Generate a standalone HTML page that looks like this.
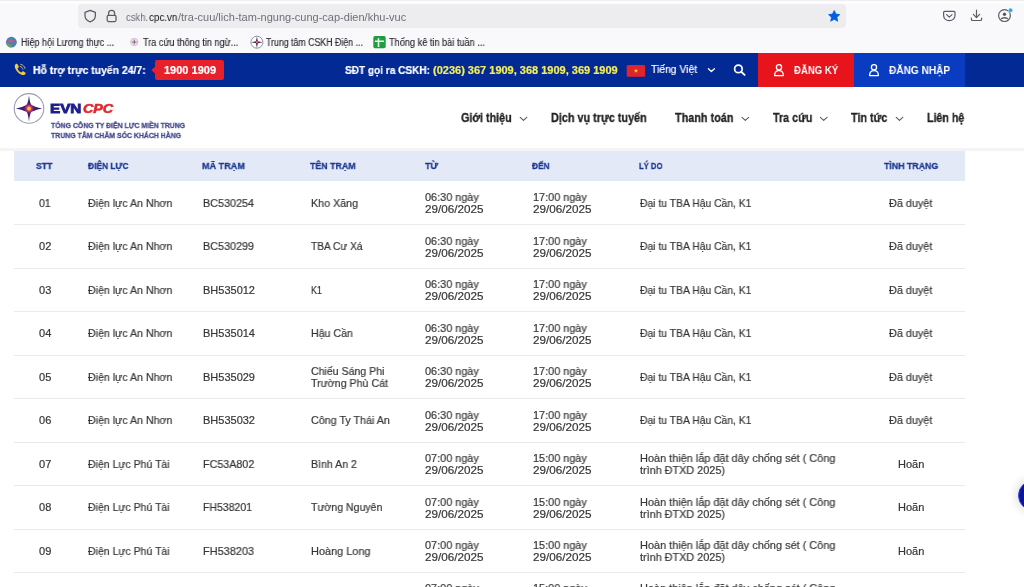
<!DOCTYPE html>
<html><head><meta charset="utf-8">
<style>
*{margin:0;padding:0;box-sizing:border-box}
html,body{width:1024px;height:587px;overflow:hidden;background:#fff;font-family:"Liberation Sans",sans-serif}
body{position:relative}
.t{position:absolute;white-space:nowrap;line-height:1;transform-origin:0 0;will-change:transform}
.a{position:absolute}
svg{position:absolute;overflow:visible}
</style></head><body>
<!-- browser chrome -->
<div class="a" style="left:0;top:0;width:1024px;height:53px;background:#f9f9fb"></div>
<div class="a" style="left:0;top:0;width:1024px;height:1px;background:#eeeef1"></div>
<div class="a" style="left:0;top:1px;width:1024px;height:3px;background:#fdfdfe"></div>
<div class="a" style="left:78px;top:4px;width:768px;height:23.5px;background:#ededf0;border-radius:4px"></div>
<svg style="left:0;top:0" width="1024" height="53" viewBox="0 0 1024 53">
  <!-- shield -->
  <path d="M90.2 10.4 L95.4 12.3 V15.6 C95.4 19 93.2 20.9 90.2 21.9 C87.2 20.9 85 19 85 15.6 V12.3 Z" fill="none" stroke="#5b5b66" stroke-width="1.25" stroke-linejoin="round"/>
  <!-- lock -->
  <path d="M108.6 15.4 V13.2 C108.6 11.4 110 10.3 111.6 10.3 C113.2 10.3 114.6 11.4 114.6 13.2 V15.4" fill="none" stroke="#5b5b66" stroke-width="1.25"/>
  <rect x="107.2" y="15.3" width="8.8" height="6.2" rx="1.2" fill="none" stroke="#5b5b66" stroke-width="1.25"/>
  <!-- star -->
  <path d="M834.2 10.5 L835.9 14.1 L839.8 14.6 L836.9 17.3 L837.7 21.2 L834.2 19.3 L830.7 21.2 L831.5 17.3 L828.6 14.6 L832.5 14.1 Z" fill="#0061e0" stroke="#0061e0" stroke-width="0.8" stroke-linejoin="round"/>
  <!-- pocket -->
  <path d="M944.6 11.4 H954 C954.6 11.4 955 11.8 955 12.4 V15.2 C955 18.4 952.6 20.6 949.3 20.6 C946 20.6 943.6 18.4 943.6 15.2 V12.4 C943.6 11.8 944 11.4 944.6 11.4 Z" fill="none" stroke="#5b5b66" stroke-width="1.2"/>
  <path d="M946.6 14.6 L949.3 17.1 L952 14.6" fill="none" stroke="#5b5b66" stroke-width="1.2" stroke-linecap="round" stroke-linejoin="round"/>
  <!-- download -->
  <path d="M976.5 10 V17.4 M973.4 14.4 L976.5 17.6 L979.6 14.4 M971.4 18 V19.2 C971.4 20 971.9 20.5 972.7 20.5 H980.3 C981.1 20.5 981.6 20 981.6 19.2 V18" fill="none" stroke="#5b5b66" stroke-width="1.2" stroke-linecap="round" stroke-linejoin="round"/>
  <!-- account -->
  <circle cx="1004.5" cy="15.6" r="5.9" fill="none" stroke="#5b5b66" stroke-width="1.2"/>
  <circle cx="1004.5" cy="14.2" r="1.7" fill="#5b5b66"/>
  <path d="M1001.2 19 C1002 17.4 1007 17.4 1007.8 19" fill="none" stroke="#5b5b66" stroke-width="1.5"/>
  <circle cx="1010.5" cy="10.3" r="2.2" fill="#25a8d8" stroke="#f9f9fb" stroke-width="0.6"/>
  <!-- bookmark icons -->
  <circle cx="11.4" cy="42.2" r="5.4" fill="#4f7fb0"/>
  <path d="M6.2 43.5 C7.5 42.5 9 43.5 10.5 44.8 C11.5 45.8 11.8 47 11.2 47.6 C8.8 47.5 6.8 45.8 6.2 43.5 Z" fill="#6aa060"/>
  <path d="M8.5 39.5 C10.5 38.8 13 39.5 14 41.2 C13 42.8 10.5 43 9 42 C8.3 41.3 8.2 40.3 8.5 39.5 Z" fill="#c0607a"/>
  <circle cx="134.3" cy="42" r="3.7" fill="#efe0ea" stroke="#c8b0c4" stroke-width="0.7"/>
  <path d="M134.3 39.6 V44.4 M131.9 42 H136.7" stroke="#7a5a78" stroke-width="0.9"/>
  <circle cx="256.9" cy="42.2" r="6" fill="#fff" stroke="#8d90a8" stroke-width="1"/>
  <path d="M256.9 36.4 L257.9 41.2 L262.6 42.2 L257.9 43.2 L256.9 48 L255.9 43.2 L251.2 42.2 L255.9 41.2 Z" fill="#4a2a58"/>
  <circle cx="256.9" cy="42.2" r="1.1" fill="#e07a5a"/>
  <rect x="373.3" y="36.1" width="12.4" height="12.1" rx="1.6" fill="#1f9d40"/>
  <path d="M378.5 38.2 V47 M374.9 41.2 H384" stroke="#e8ffe8" stroke-width="1.6"/>
</svg>

<!-- top bar -->
<div class="a" style="left:0;top:53px;width:1024px;height:34px;background:#032995"></div>
<div class="a" style="left:758px;top:53px;width:95.6px;height:34px;background:#e7141c"></div>
<div class="a" style="left:853.6px;top:53px;width:111.3px;height:34px;background:#0a3cc2"></div>
<div class="a" style="left:155.1px;top:60px;width:68.9px;height:20px;background:#e7202a;border-radius:2px"></div>
<svg style="left:0;top:53px" width="1024" height="34" viewBox="0 53 1024 34">
  <path d="M151.2 70.1 L155.6 66.3 V73.9 Z" fill="#e7202a"/>
  <!-- phone -->
  <path d="M15.6 64.2 C16.4 63.6 17.3 63.8 17.7 64.5 L18.6 66.2 C18.9 66.9 18.7 67.5 18.1 67.9 L17.4 68.4 C18 70.2 19.6 71.9 21.4 72.6 L21.9 71.9 C22.3 71.3 23 71.1 23.6 71.5 L25.1 72.5 C25.7 72.9 25.8 73.7 25.2 74.2 L24.6 74.7 C23.2 75.6 20.2 74.6 17.8 72.2 C15.4 69.8 14.2 66.6 15 65 Z" fill="#f5c94a"/>
  <path d="M20.2 66.4 C21.6 66.7 22.6 67.7 22.9 69.1 M20.8 64.3 C22.9 64.6 24.6 66.3 25 68.4" fill="none" stroke="#b9b2a0" stroke-width="1" stroke-linecap="round"/>
  <!-- flag -->
  <rect x="626.7" y="65" width="18.5" height="11.7" rx="1.5" fill="#e0242c"/>
  <path d="M636 68.6 L636.6 70.2 L638.3 70.2 L636.9 71.2 L637.4 72.8 L636 71.8 L634.6 72.8 L635.1 71.2 L633.7 70.2 L635.4 70.2 Z" fill="#f7d83a"/>
  <!-- chevron -->
  <path d="M708.4 68.7 L711.4 71.5 L714.4 68.7" fill="none" stroke="#fff" stroke-width="1.3" stroke-linecap="round" stroke-linejoin="round"/>
  <!-- search -->
  <circle cx="738.4" cy="68.9" r="3.8" fill="none" stroke="#fff" stroke-width="1.7"/>
  <path d="M741.2 71.7 L744.6 74.9" stroke="#fff" stroke-width="1.9" stroke-linecap="round"/>
  <!-- users -->
  <g fill="none" stroke="#fff" stroke-width="1.3">
    <circle cx="779" cy="67.2" r="2.6"/>
    <path d="M774.6 75.6 C774.6 72.4 776.4 70.6 779 70.6 C781.6 70.6 783.4 72.4 783.4 75.6 Z" stroke-linejoin="round"/>
    <circle cx="874" cy="67.2" r="2.6"/>
    <path d="M869.6 75.6 C869.6 72.4 871.4 70.6 874 70.6 C876.6 70.6 878.4 72.4 878.4 75.6 Z" stroke-linejoin="round"/>
  </g>
</svg>

<!-- header -->
<div class="a" style="left:0;top:147.5px;width:1024px;height:3.5px;background:#f4f4f4"></div>
<svg style="left:0;top:87px" width="1024" height="60" viewBox="0 87 1024 60">
  <circle cx="29" cy="108.4" r="14.8" fill="#fff" stroke="#9c9cb6" stroke-width="1.1"/>
  <defs><radialGradient id="sg" cx="0.5" cy="0.5" r="0.5"><stop offset="0" stop-color="#ffe640"/><stop offset="0.1" stop-color="#f8b83a"/><stop offset="0.2" stop-color="#c8385a"/><stop offset="0.38" stop-color="#4a1a7a"/><stop offset="1" stop-color="#1c1870"/></radialGradient></defs>
  <path d="M29 95.3 C29.6 100.5 30.4 104.8 32.2 105.2 C34 106.2 37.5 107.6 42.1 108.4 C37.5 109.2 34 110.6 32.2 111.6 C30.4 112 29.6 116.3 29 121.8 C28.4 116.3 27.6 112 25.8 111.6 C24 110.6 20.5 109.2 15.9 108.4 C20.5 107.6 24 106.2 25.8 105.2 C27.6 104.8 28.4 100.5 29 95.3 Z" fill="url(#sg)"/>
  <g fill="none" stroke="#5a5a5a" stroke-width="1.1" stroke-linecap="round" stroke-linejoin="round">
    <path d="M520.2 117.4 L523.5 120.4 L526.8 117.4"/>
    <path d="M742 117.4 L745.3 120.4 L748.6 117.4"/>
    <path d="M820.4 117.4 L823.7 120.4 L827 117.4"/>
    <path d="M896.2 117.4 L899.5 120.4 L902.8 117.4"/>
  </g>
</svg>

<!-- table -->
<div class="a" style="left:14px;top:151px;width:950.5px;height:29.6px;background:#e4e9f8"></div>
<div class="a" style="left:14px;top:224px;width:951px;height:1px;background:#ebebeb"></div>
<div class="a" style="left:14px;top:267.5px;width:951px;height:1px;background:#ebebeb"></div>
<div class="a" style="left:14px;top:311px;width:951px;height:1px;background:#ebebeb"></div>
<div class="a" style="left:14px;top:354.5px;width:951px;height:1px;background:#ebebeb"></div>
<div class="a" style="left:14px;top:398px;width:951px;height:1px;background:#ebebeb"></div>
<div class="a" style="left:14px;top:441.5px;width:951px;height:1px;background:#ebebeb"></div>
<div class="a" style="left:14px;top:485px;width:951px;height:1px;background:#ebebeb"></div>
<div class="a" style="left:14px;top:528.5px;width:951px;height:1px;background:#ebebeb"></div>
<div class="a" style="left:14px;top:572px;width:951px;height:1px;background:#ebebeb"></div>

<!-- floating circle -->
<div class="a" style="left:1017.8px;top:480.2px;width:31px;height:31px;border-radius:50%;background:#0a159c;border:1px solid #3a4ad0;box-shadow:0 0 10px 2px rgba(0,0,0,0.13)"></div>

<div class="t" style="left:125.70px;top:11.56px;font-size:10.8px;color:#6f6f78;transform:scaleX(0.8770)">cskh.</div>
<div class="t" style="left:148.80px;top:11.56px;font-size:10.8px;color:#15141a;transform:scaleX(0.9071)">cpc.vn</div>
<div class="t" style="left:177.60px;top:11.56px;font-size:10.8px;color:#6f6f78;transform:scaleX(1.0194)">/tra-cuu/lich-tam-ngung-cung-cap-dien/khu-vuc</div>
<div class="t" style="left:20.50px;top:37.83px;font-size:10px;color:#2b2a33;transform:scaleX(0.9020);-webkit-text-stroke:0.15px #2b2a33">Hiệp hội Lương thực ...</div>
<div class="t" style="left:143.00px;top:37.83px;font-size:10px;color:#2b2a33;transform:scaleX(0.9090);-webkit-text-stroke:0.15px #2b2a33">Tra cứu thông tin ngừ...</div>
<div class="t" style="left:266.10px;top:37.83px;font-size:10px;color:#2b2a33;transform:scaleX(0.8790);-webkit-text-stroke:0.15px #2b2a33">Trung tâm CSKH Điện ...</div>
<div class="t" style="left:388.50px;top:37.83px;font-size:10px;color:#2b2a33;transform:scaleX(0.9177);-webkit-text-stroke:0.15px #2b2a33">Thống kê tin bài tuần ...</div>
<div class="t" style="left:32.80px;top:64.99px;font-size:11px;color:#ffffff;font-weight:bold;transform:scaleX(0.9457);-webkit-text-stroke:0.2px #ffffff">Hỗ trợ trực tuyến 24/7:</div>
<div class="t" style="left:163.90px;top:64.99px;font-size:11px;color:#ffffff;font-weight:bold;-webkit-text-stroke:0.2px #ffffff">1900 1909</div>
<div class="t" style="left:345.20px;top:64.99px;font-size:11px;color:#ffffff;font-weight:bold;transform:scaleX(0.9151);-webkit-text-stroke:0.2px #ffffff">SĐT gọi ra CSKH:</div>
<div class="t" style="left:433.00px;top:64.99px;font-size:11px;color:#f3ef5c;font-weight:bold;-webkit-text-stroke:0.2px #f3ef5c">(0236) 367 1909, 368 1909, 369 1909</div>
<div class="t" style="left:651.00px;top:64.22px;font-size:11.2px;color:#ffffff;transform:scaleX(0.9261);-webkit-text-stroke:0.2px #ffffff">Tiếng Việt</div>
<div class="t" style="left:793.60px;top:64.99px;font-size:11px;color:#ffffff;font-weight:bold;transform:scaleX(0.8699)">ĐĂNG KÝ</div>
<div class="t" style="left:888.60px;top:64.99px;font-size:11px;color:#ffffff;font-weight:bold;transform:scaleX(0.9174)">ĐĂNG NHẬP</div>
<div class="t" style="left:461.10px;top:111.62px;font-size:12.5px;color:#222222;font-weight:bold;transform:scaleX(0.8601);-webkit-text-stroke:0.3px #222222">Giới thiệu</div>
<div class="t" style="left:550.80px;top:111.62px;font-size:12.5px;color:#222222;font-weight:bold;transform:scaleX(0.8668);-webkit-text-stroke:0.3px #222222">Dịch vụ trực tuyến</div>
<div class="t" style="left:675.00px;top:111.62px;font-size:12.5px;color:#222222;font-weight:bold;transform:scaleX(0.8678);-webkit-text-stroke:0.3px #222222">Thanh toán</div>
<div class="t" style="left:772.80px;top:111.62px;font-size:12.5px;color:#222222;font-weight:bold;transform:scaleX(0.8577);-webkit-text-stroke:0.3px #222222">Tra cứu</div>
<div class="t" style="left:851.10px;top:111.62px;font-size:12.5px;color:#222222;font-weight:bold;transform:scaleX(0.8601);-webkit-text-stroke:0.3px #222222">Tin tức</div>
<div class="t" style="left:926.60px;top:111.62px;font-size:12.5px;color:#222222;font-weight:bold;transform:scaleX(0.8515);-webkit-text-stroke:0.3px #222222">Liên hệ</div>
<div class="t" style="left:49.80px;top:101.86px;font-size:13.4px;color:#1c1f8c;font-weight:bold;transform:scaleX(1.1391);-webkit-text-stroke:0.9px #1c1f8c">EVN</div>
<div class="t" style="left:83.30px;top:101.86px;font-size:13.4px;color:#e2262e;font-weight:bold;font-style:italic;transform:scaleX(1.0664);-webkit-text-stroke:0.6px #e2262e">CPC</div>
<div class="t" style="left:50.50px;top:122.40px;font-size:7.8px;color:#454a8c;font-weight:bold;transform:scaleX(0.8857);-webkit-text-stroke:0.3px #454a8c">TỔNG CÔNG TY ĐIỆN LỰC MIỀN TRUNG</div>
<div class="t" style="left:50.50px;top:132.20px;font-size:7.8px;color:#454a8c;font-weight:bold;transform:scaleX(0.8858);-webkit-text-stroke:0.3px #454a8c">TRUNG TÂM CHĂM SÓC KHÁCH HÀNG</div>
<div class="t" style="left:36.40px;top:160.62px;font-size:9.9px;color:#1d3a92;font-weight:bold;transform:scaleX(0.8862);-webkit-text-stroke:0.3px #1d3a92">STT</div>
<div class="t" style="left:87.50px;top:160.62px;font-size:9.9px;color:#1d3a92;font-weight:bold;transform:scaleX(0.8515);-webkit-text-stroke:0.3px #1d3a92">ĐIỆN LỰC</div>
<div class="t" style="left:202.40px;top:160.62px;font-size:9.9px;color:#1d3a92;font-weight:bold;transform:scaleX(0.9182);-webkit-text-stroke:0.3px #1d3a92">MÃ TRẠM</div>
<div class="t" style="left:309.80px;top:160.62px;font-size:9.9px;color:#1d3a92;font-weight:bold;transform:scaleX(0.8939);-webkit-text-stroke:0.3px #1d3a92">TÊN TRẠM</div>
<div class="t" style="left:424.80px;top:160.62px;font-size:9.9px;color:#1d3a92;font-weight:bold;transform:scaleX(0.9109);-webkit-text-stroke:0.3px #1d3a92">TỪ</div>
<div class="t" style="left:532.00px;top:160.62px;font-size:9.9px;color:#1d3a92;font-weight:bold;transform:scaleX(0.8337);-webkit-text-stroke:0.3px #1d3a92">ĐẾN</div>
<div class="t" style="left:639.30px;top:160.62px;font-size:9.9px;color:#1d3a92;font-weight:bold;transform:scaleX(0.7778);-webkit-text-stroke:0.3px #1d3a92">LÝ DO</div>
<div class="t" style="left:883.60px;top:160.62px;font-size:9.9px;color:#1d3a92;font-weight:bold;transform:scaleX(0.8904);-webkit-text-stroke:0.3px #1d3a92">TÌNH TRẠNG</div>
<div class="t" style="left:38.50px;top:197.59px;font-size:11px;color:#363636;transform:scaleX(0.9573);-webkit-text-stroke:0.2px #363636">01</div>
<div class="t" style="left:88.00px;top:197.59px;font-size:11px;color:#363636;transform:scaleX(0.9659);-webkit-text-stroke:0.2px #363636">Điện lực An Nhơn</div>
<div class="t" style="left:203.00px;top:197.59px;font-size:11px;color:#363636;transform:scaleX(0.9818);-webkit-text-stroke:0.2px #363636">BC530254</div>
<div class="t" style="left:310.50px;top:197.59px;font-size:11px;color:#363636;transform:scaleX(0.9734);-webkit-text-stroke:0.2px #363636">Kho Xăng</div>
<div class="t" style="left:424.90px;top:192.09px;font-size:11px;color:#363636;transform:scaleX(0.9880);-webkit-text-stroke:0.2px #363636">06:30 ngày</div>
<div class="t" style="left:424.90px;top:204.19px;font-size:11px;color:#363636;transform:scaleX(1.0622);-webkit-text-stroke:0.2px #363636">29/06/2025</div>
<div class="t" style="left:533.00px;top:192.09px;font-size:11px;color:#363636;transform:scaleX(0.9880);-webkit-text-stroke:0.2px #363636">17:00 ngày</div>
<div class="t" style="left:533.00px;top:204.19px;font-size:11px;color:#363636;transform:scaleX(1.0622);-webkit-text-stroke:0.2px #363636">29/06/2025</div>
<div class="t" style="left:639.70px;top:197.59px;font-size:11px;color:#363636;transform:scaleX(0.9413);-webkit-text-stroke:0.2px #363636">Đại tu TBA Hậu Cần, K1</div>
<div class="t" style="left:889.34px;top:197.59px;font-size:11px;color:#363636;transform:scaleX(0.9854);-webkit-text-stroke:0.2px #363636">Đã duyệt</div>
<div class="t" style="left:39.01px;top:241.09px;font-size:11px;color:#363636;transform:scaleX(1.0053);-webkit-text-stroke:0.2px #363636">02</div>
<div class="t" style="left:88.00px;top:241.09px;font-size:11px;color:#363636;transform:scaleX(0.9659);-webkit-text-stroke:0.2px #363636">Điện lực An Nhơn</div>
<div class="t" style="left:203.00px;top:241.09px;font-size:11px;color:#363636;transform:scaleX(0.9818);-webkit-text-stroke:0.2px #363636">BC530299</div>
<div class="t" style="left:310.50px;top:241.09px;font-size:11px;color:#363636;transform:scaleX(0.9258);-webkit-text-stroke:0.2px #363636">TBA Cư Xá</div>
<div class="t" style="left:424.90px;top:235.59px;font-size:11px;color:#363636;transform:scaleX(0.9880);-webkit-text-stroke:0.2px #363636">06:30 ngày</div>
<div class="t" style="left:424.90px;top:247.69px;font-size:11px;color:#363636;transform:scaleX(1.0622);-webkit-text-stroke:0.2px #363636">29/06/2025</div>
<div class="t" style="left:533.00px;top:235.59px;font-size:11px;color:#363636;transform:scaleX(0.9880);-webkit-text-stroke:0.2px #363636">17:00 ngày</div>
<div class="t" style="left:533.00px;top:247.69px;font-size:11px;color:#363636;transform:scaleX(1.0622);-webkit-text-stroke:0.2px #363636">29/06/2025</div>
<div class="t" style="left:639.70px;top:241.09px;font-size:11px;color:#363636;transform:scaleX(0.9413);-webkit-text-stroke:0.2px #363636">Đại tu TBA Hậu Cần, K1</div>
<div class="t" style="left:889.34px;top:241.09px;font-size:11px;color:#363636;transform:scaleX(0.9854);-webkit-text-stroke:0.2px #363636">Đã duyệt</div>
<div class="t" style="left:39.01px;top:284.59px;font-size:11px;color:#363636;transform:scaleX(1.0053);-webkit-text-stroke:0.2px #363636">03</div>
<div class="t" style="left:88.00px;top:284.59px;font-size:11px;color:#363636;transform:scaleX(0.9659);-webkit-text-stroke:0.2px #363636">Điện lực An Nhơn</div>
<div class="t" style="left:203.00px;top:284.59px;font-size:11px;color:#363636;-webkit-text-stroke:0.2px #363636">BH535012</div>
<div class="t" style="left:310.50px;top:284.59px;font-size:11px;color:#363636;transform:scaleX(0.8174);-webkit-text-stroke:0.2px #363636">K1</div>
<div class="t" style="left:424.90px;top:279.09px;font-size:11px;color:#363636;transform:scaleX(0.9880);-webkit-text-stroke:0.2px #363636">06:30 ngày</div>
<div class="t" style="left:424.90px;top:291.19px;font-size:11px;color:#363636;transform:scaleX(1.0622);-webkit-text-stroke:0.2px #363636">29/06/2025</div>
<div class="t" style="left:533.00px;top:279.09px;font-size:11px;color:#363636;transform:scaleX(0.9880);-webkit-text-stroke:0.2px #363636">17:00 ngày</div>
<div class="t" style="left:533.00px;top:291.19px;font-size:11px;color:#363636;transform:scaleX(1.0622);-webkit-text-stroke:0.2px #363636">29/06/2025</div>
<div class="t" style="left:639.70px;top:284.59px;font-size:11px;color:#363636;transform:scaleX(0.9413);-webkit-text-stroke:0.2px #363636">Đại tu TBA Hậu Cần, K1</div>
<div class="t" style="left:889.34px;top:284.59px;font-size:11px;color:#363636;transform:scaleX(0.9854);-webkit-text-stroke:0.2px #363636">Đã duyệt</div>
<div class="t" style="left:39.01px;top:328.09px;font-size:11px;color:#363636;transform:scaleX(1.0053);-webkit-text-stroke:0.2px #363636">04</div>
<div class="t" style="left:88.00px;top:328.09px;font-size:11px;color:#363636;transform:scaleX(0.9659);-webkit-text-stroke:0.2px #363636">Điện lực An Nhơn</div>
<div class="t" style="left:203.00px;top:328.09px;font-size:11px;color:#363636;-webkit-text-stroke:0.2px #363636">BH535014</div>
<div class="t" style="left:310.50px;top:328.09px;font-size:11px;color:#363636;transform:scaleX(0.9646);-webkit-text-stroke:0.2px #363636">Hậu Cần</div>
<div class="t" style="left:424.90px;top:322.59px;font-size:11px;color:#363636;transform:scaleX(0.9880);-webkit-text-stroke:0.2px #363636">06:30 ngày</div>
<div class="t" style="left:424.90px;top:334.69px;font-size:11px;color:#363636;transform:scaleX(1.0622);-webkit-text-stroke:0.2px #363636">29/06/2025</div>
<div class="t" style="left:533.00px;top:322.59px;font-size:11px;color:#363636;transform:scaleX(0.9880);-webkit-text-stroke:0.2px #363636">17:00 ngày</div>
<div class="t" style="left:533.00px;top:334.69px;font-size:11px;color:#363636;transform:scaleX(1.0622);-webkit-text-stroke:0.2px #363636">29/06/2025</div>
<div class="t" style="left:639.70px;top:328.09px;font-size:11px;color:#363636;transform:scaleX(0.9413);-webkit-text-stroke:0.2px #363636">Đại tu TBA Hậu Cần, K1</div>
<div class="t" style="left:889.34px;top:328.09px;font-size:11px;color:#363636;transform:scaleX(0.9854);-webkit-text-stroke:0.2px #363636">Đã duyệt</div>
<div class="t" style="left:39.01px;top:371.59px;font-size:11px;color:#363636;transform:scaleX(1.0053);-webkit-text-stroke:0.2px #363636">05</div>
<div class="t" style="left:88.00px;top:371.59px;font-size:11px;color:#363636;transform:scaleX(0.9659);-webkit-text-stroke:0.2px #363636">Điện lực An Nhơn</div>
<div class="t" style="left:203.00px;top:371.59px;font-size:11px;color:#363636;-webkit-text-stroke:0.2px #363636">BH535029</div>
<div class="t" style="left:310.50px;top:366.09px;font-size:11px;color:#363636;transform:scaleX(0.9607);-webkit-text-stroke:0.2px #363636">Chiếu Sáng Phi</div>
<div class="t" style="left:310.50px;top:378.19px;font-size:11px;color:#363636;transform:scaleX(0.9669);-webkit-text-stroke:0.2px #363636">Trường Phù Cát</div>
<div class="t" style="left:424.90px;top:366.09px;font-size:11px;color:#363636;transform:scaleX(0.9880);-webkit-text-stroke:0.2px #363636">06:30 ngày</div>
<div class="t" style="left:424.90px;top:378.19px;font-size:11px;color:#363636;transform:scaleX(1.0622);-webkit-text-stroke:0.2px #363636">29/06/2025</div>
<div class="t" style="left:533.00px;top:366.09px;font-size:11px;color:#363636;transform:scaleX(0.9880);-webkit-text-stroke:0.2px #363636">17:00 ngày</div>
<div class="t" style="left:533.00px;top:378.19px;font-size:11px;color:#363636;transform:scaleX(1.0622);-webkit-text-stroke:0.2px #363636">29/06/2025</div>
<div class="t" style="left:639.70px;top:371.59px;font-size:11px;color:#363636;transform:scaleX(0.9413);-webkit-text-stroke:0.2px #363636">Đại tu TBA Hậu Cần, K1</div>
<div class="t" style="left:889.34px;top:371.59px;font-size:11px;color:#363636;transform:scaleX(0.9854);-webkit-text-stroke:0.2px #363636">Đã duyệt</div>
<div class="t" style="left:39.01px;top:415.09px;font-size:11px;color:#363636;transform:scaleX(1.0053);-webkit-text-stroke:0.2px #363636">06</div>
<div class="t" style="left:88.00px;top:415.09px;font-size:11px;color:#363636;transform:scaleX(0.9659);-webkit-text-stroke:0.2px #363636">Điện lực An Nhơn</div>
<div class="t" style="left:203.00px;top:415.09px;font-size:11px;color:#363636;-webkit-text-stroke:0.2px #363636">BH535032</div>
<div class="t" style="left:310.50px;top:415.09px;font-size:11px;color:#363636;transform:scaleX(0.9743);-webkit-text-stroke:0.2px #363636">Công Ty Thái An</div>
<div class="t" style="left:424.90px;top:409.59px;font-size:11px;color:#363636;transform:scaleX(0.9880);-webkit-text-stroke:0.2px #363636">06:30 ngày</div>
<div class="t" style="left:424.90px;top:421.69px;font-size:11px;color:#363636;transform:scaleX(1.0622);-webkit-text-stroke:0.2px #363636">29/06/2025</div>
<div class="t" style="left:533.00px;top:409.59px;font-size:11px;color:#363636;transform:scaleX(0.9880);-webkit-text-stroke:0.2px #363636">17:00 ngày</div>
<div class="t" style="left:533.00px;top:421.69px;font-size:11px;color:#363636;transform:scaleX(1.0622);-webkit-text-stroke:0.2px #363636">29/06/2025</div>
<div class="t" style="left:639.70px;top:415.09px;font-size:11px;color:#363636;transform:scaleX(0.9413);-webkit-text-stroke:0.2px #363636">Đại tu TBA Hậu Cần, K1</div>
<div class="t" style="left:889.34px;top:415.09px;font-size:11px;color:#363636;transform:scaleX(0.9854);-webkit-text-stroke:0.2px #363636">Đã duyệt</div>
<div class="t" style="left:39.01px;top:458.59px;font-size:11px;color:#363636;transform:scaleX(1.0053);-webkit-text-stroke:0.2px #363636">07</div>
<div class="t" style="left:88.00px;top:458.59px;font-size:11px;color:#363636;transform:scaleX(0.9556);-webkit-text-stroke:0.2px #363636">Điện Lực Phú Tài</div>
<div class="t" style="left:203.00px;top:458.59px;font-size:11px;color:#363636;transform:scaleX(0.9747);-webkit-text-stroke:0.2px #363636">FC53A802</div>
<div class="t" style="left:310.50px;top:458.59px;font-size:11px;color:#363636;transform:scaleX(0.9631);-webkit-text-stroke:0.2px #363636">Bình An 2</div>
<div class="t" style="left:424.90px;top:453.09px;font-size:11px;color:#363636;transform:scaleX(0.9880);-webkit-text-stroke:0.2px #363636">07:00 ngày</div>
<div class="t" style="left:424.90px;top:465.19px;font-size:11px;color:#363636;transform:scaleX(1.0622);-webkit-text-stroke:0.2px #363636">29/06/2025</div>
<div class="t" style="left:533.00px;top:453.09px;font-size:11px;color:#363636;transform:scaleX(0.9880);-webkit-text-stroke:0.2px #363636">15:00 ngày</div>
<div class="t" style="left:533.00px;top:465.19px;font-size:11px;color:#363636;transform:scaleX(1.0622);-webkit-text-stroke:0.2px #363636">29/06/2025</div>
<div class="t" style="left:639.70px;top:453.09px;font-size:11px;color:#363636;transform:scaleX(0.9923);-webkit-text-stroke:0.2px #363636">Hoàn thiện lắp đặt dây chống sét ( Công</div>
<div class="t" style="left:639.70px;top:465.19px;font-size:11px;color:#363636;transform:scaleX(0.9853);-webkit-text-stroke:0.2px #363636">trình ĐTXD 2025)</div>
<div class="t" style="left:897.95px;top:458.59px;font-size:11px;color:#363636;-webkit-text-stroke:0.2px #363636">Hoãn</div>
<div class="t" style="left:39.01px;top:502.09px;font-size:11px;color:#363636;transform:scaleX(1.0053);-webkit-text-stroke:0.2px #363636">08</div>
<div class="t" style="left:88.00px;top:502.09px;font-size:11px;color:#363636;transform:scaleX(0.9556);-webkit-text-stroke:0.2px #363636">Điện Lực Phú Tài</div>
<div class="t" style="left:203.00px;top:502.09px;font-size:11px;color:#363636;transform:scaleX(0.9529);-webkit-text-stroke:0.2px #363636">FH538201</div>
<div class="t" style="left:310.50px;top:502.09px;font-size:11px;color:#363636;transform:scaleX(0.9570);-webkit-text-stroke:0.2px #363636">Tường Nguyên</div>
<div class="t" style="left:424.90px;top:496.59px;font-size:11px;color:#363636;transform:scaleX(0.9880);-webkit-text-stroke:0.2px #363636">07:00 ngày</div>
<div class="t" style="left:424.90px;top:508.69px;font-size:11px;color:#363636;transform:scaleX(1.0622);-webkit-text-stroke:0.2px #363636">29/06/2025</div>
<div class="t" style="left:533.00px;top:496.59px;font-size:11px;color:#363636;transform:scaleX(0.9880);-webkit-text-stroke:0.2px #363636">15:00 ngày</div>
<div class="t" style="left:533.00px;top:508.69px;font-size:11px;color:#363636;transform:scaleX(1.0622);-webkit-text-stroke:0.2px #363636">29/06/2025</div>
<div class="t" style="left:639.70px;top:496.59px;font-size:11px;color:#363636;transform:scaleX(0.9923);-webkit-text-stroke:0.2px #363636">Hoàn thiện lắp đặt dây chống sét ( Công</div>
<div class="t" style="left:639.70px;top:508.69px;font-size:11px;color:#363636;transform:scaleX(0.9853);-webkit-text-stroke:0.2px #363636">trình ĐTXD 2025)</div>
<div class="t" style="left:897.95px;top:502.09px;font-size:11px;color:#363636;-webkit-text-stroke:0.2px #363636">Hoãn</div>
<div class="t" style="left:39.01px;top:545.59px;font-size:11px;color:#363636;transform:scaleX(1.0053);-webkit-text-stroke:0.2px #363636">09</div>
<div class="t" style="left:88.00px;top:545.59px;font-size:11px;color:#363636;transform:scaleX(0.9556);-webkit-text-stroke:0.2px #363636">Điện Lực Phú Tài</div>
<div class="t" style="left:203.00px;top:545.59px;font-size:11px;color:#363636;transform:scaleX(0.9919);-webkit-text-stroke:0.2px #363636">FH538203</div>
<div class="t" style="left:310.50px;top:545.59px;font-size:11px;color:#363636;transform:scaleX(0.9922);-webkit-text-stroke:0.2px #363636">Hoàng Long</div>
<div class="t" style="left:424.90px;top:540.09px;font-size:11px;color:#363636;transform:scaleX(0.9880);-webkit-text-stroke:0.2px #363636">07:00 ngày</div>
<div class="t" style="left:424.90px;top:552.19px;font-size:11px;color:#363636;transform:scaleX(1.0622);-webkit-text-stroke:0.2px #363636">29/06/2025</div>
<div class="t" style="left:533.00px;top:540.09px;font-size:11px;color:#363636;transform:scaleX(0.9880);-webkit-text-stroke:0.2px #363636">15:00 ngày</div>
<div class="t" style="left:533.00px;top:552.19px;font-size:11px;color:#363636;transform:scaleX(1.0622);-webkit-text-stroke:0.2px #363636">29/06/2025</div>
<div class="t" style="left:639.70px;top:540.09px;font-size:11px;color:#363636;transform:scaleX(0.9923);-webkit-text-stroke:0.2px #363636">Hoàn thiện lắp đặt dây chống sét ( Công</div>
<div class="t" style="left:639.70px;top:552.19px;font-size:11px;color:#363636;transform:scaleX(0.9853);-webkit-text-stroke:0.2px #363636">trình ĐTXD 2025)</div>
<div class="t" style="left:897.95px;top:545.59px;font-size:11px;color:#363636;-webkit-text-stroke:0.2px #363636">Hoãn</div>
<div class="t" style="left:424.90px;top:582.59px;font-size:11px;color:#363636;transform:scaleX(0.9880);-webkit-text-stroke:0.2px #363636">07:00 ngày</div>
<div class="t" style="left:533.00px;top:582.59px;font-size:11px;color:#363636;transform:scaleX(0.9880);-webkit-text-stroke:0.2px #363636">15:00 ngày</div>
<div class="t" style="left:639.70px;top:582.59px;font-size:11px;color:#363636;transform:scaleX(0.9923);-webkit-text-stroke:0.2px #363636">Hoàn thiện lắp đặt dây chống sét ( Công</div>
</body></html>
